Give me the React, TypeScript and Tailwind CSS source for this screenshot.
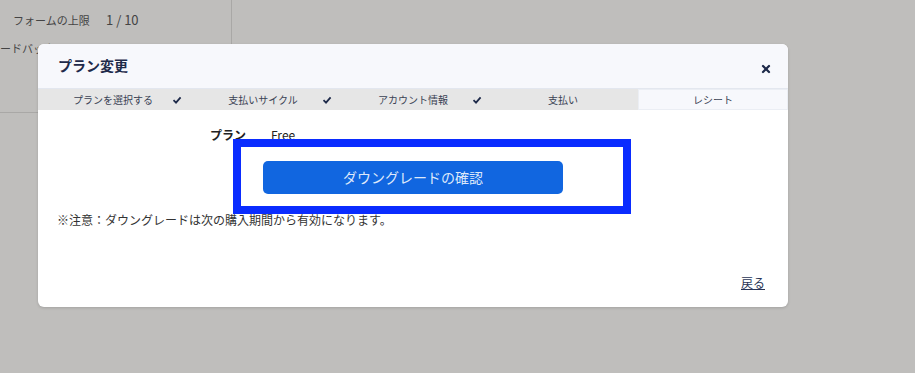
import { X } from 'lucide-react';

const steps = [
  { label: 'プランを選択する', done: true },
  { label: '支払いサイクル', done: true },
  { label: 'アカウント情報', done: true },
  { label: '支払い', done: false },
  { label: 'レシート', done: false, active: true },
];

function Check() {
  return (
    <svg width="10" height="10" viewBox="0 0 10 10" className="absolute right-[6px] top-[6px]">
      <path d="M1.5 5.2 L4 7.6 L8.6 2.4" fill="none" stroke="#1e2a4a" strokeWidth="1.8" />
    </svg>
  );
}

export default function App() {
  return (
    <div
      className="relative w-[915px] h-[373px] overflow-hidden bg-[#bfbebc] text-[#333]"
      style={{ fontFamily: '"Noto Sans CJK JP", "Noto Sans", sans-serif' }}
    >
      {/* page behind the modal */}
      <div className="w-[232px] h-[113px] pt-[10px] border-r border-b border-[#a9a8a6]">
        <div className="flex items-center h-[20px] pl-[13px] text-[11px] text-[#444]">
          <span className="w-[93px]">フォームの上限</span>
          <span className="text-[13px]">1 / 10</span>
        </div>
        <div className="mt-[10px] text-[11px] text-[#444] whitespace-nowrap">ードバック</div>
      </div>

      {/* modal */}
      <div className="absolute left-[38px] top-[44px] w-[750px] h-[263px] rounded-[6px] bg-white overflow-hidden shadow-[0_1px_3px_rgba(0,0,0,0.15)]">
        <div className="h-[44px] bg-[#f7f8fc] flex items-center justify-between pl-[20px] pr-[16px]">
          <h2 className="text-[14px] font-bold text-[#1e2a4a] mt-[-2px]">プラン変更</h2>
          <X className="w-[12px] h-[12px] text-[#1e2a4a] mt-[5px]" strokeWidth={4.5} />
        </div>
        <div className="grid grid-cols-5 h-[22px] bg-[#e6e6e6] border-t border-[#e3e7ef]">
          {steps.map((s) => (
            <div
              key={s.label}
              className={`relative flex items-center justify-center text-[10px] text-[#3a4254] ${
                s.active ? 'bg-[#f7f8fc] border border-[#ebeef4]' : ''
              }`}
            >
              {s.label}
              {s.done && <Check />}
            </div>
          ))}
        </div>

        <div className="pt-[15px]">
          <div className="flex items-center h-[20px] text-[12px]">
            <span className="pl-[172px] w-[233px] font-bold text-[#222]">プラン</span>
            <span className="text-[#222]">Free</span>
          </div>
          <div className="flex justify-center mt-[16px]">
            <button className="w-[300px] h-[33px] rounded-[5px] bg-[#1166e0] text-[14px] text-[#dde8fa]">
              ダウングレードの確認
            </button>
          </div>
          <p className="mt-[17px] pl-[19px] text-[12px] leading-[18px] text-[#333]">
            ※注意：ダウングレードは次の購入期間から有効になります。
          </p>
          <div className="flex justify-end pr-[23px] mt-[45px]">
            <a className="text-[12px] leading-[18px] text-[#2a3556] underline">戻る</a>
          </div>
        </div>
      </div>

      {/* highlight overlay */}
      <div className="absolute left-[233px] top-[139px] w-[398px] h-[75px] border-[8px] border-[#0a2cff]" />
    </div>
  );
}
